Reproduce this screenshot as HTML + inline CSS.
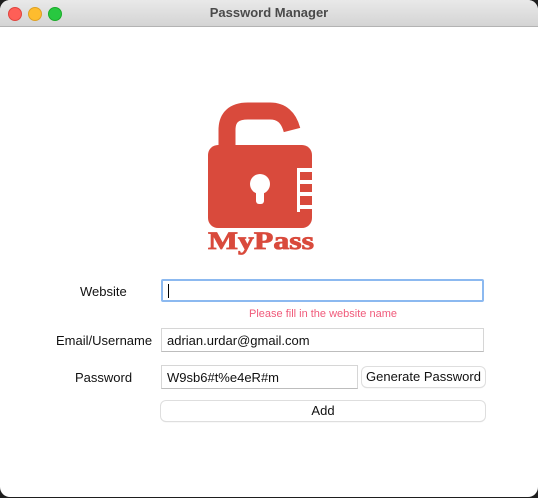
<!DOCTYPE html>
<html><head><style>
body{margin:0;width:538px;height:498px;background:#1e1e1e;font-family:"Liberation Sans",sans-serif;overflow:hidden}
.win{position:absolute;left:0;top:0;width:538px;height:497px;background:#fff;border-radius:10px;overflow:hidden}
.tb{height:26px;background:linear-gradient(#e9e9e9,#d4d4d4);border-bottom:1px solid #b3b3b3;text-align:center;font-weight:bold;font-size:13px;color:#4a4a4a;line-height:26px;position:relative}
.d{position:absolute;top:7px;width:12px;height:12px;border-radius:50%}
.lbl{position:absolute;font-size:13px;color:#111;text-align:center}
.in{position:absolute;background:#fff;border:1px solid #d6d6d6;border-bottom-color:#bdbdbd;box-sizing:border-box;font-size:13px;padding-left:5px;color:#111}
.btn{position:absolute;background:#fff;border-radius:5px;box-shadow:0 0 0 1px #dedede,0 1px 1px #ccc;font-size:13px;text-align:center;color:#111}
</style></head><body>
<div class="win">
<div class="tb">Password Manager
<div class="d" style="left:8px;background:#fe5f57;border:.5px solid #e0443e"></div>
<div class="d" style="left:28px;background:#febc2e;border:.5px solid #dea123"></div>
<div class="d" style="left:48px;background:#28c840;border:.5px solid #1aab29"></div>
</div>
<svg style="position:absolute;left:0;top:0" width="538" height="260">
<path d="M227 147 V130 Q227 111 248 111 H270 Q287 111 292 130" fill="none" stroke="#d94a3c" stroke-width="17"/>
<rect x="208" y="145" width="104" height="83" rx="10" fill="#d94a3c"/>
<circle cx="260" cy="184" r="10" fill="#fff"/>
<rect x="256" y="186" width="8" height="18" rx="3" fill="#fff"/>
<rect x="297" y="168" width="3" height="44" fill="#fff"/>
<rect x="297" y="168" width="16" height="4" fill="#fff"/>
<rect x="297" y="180" width="16" height="4" fill="#fff"/>
<rect x="297" y="192" width="16" height="4" fill="#fff"/>
<rect x="297" y="205" width="16" height="4" fill="#fff"/>
<text x="208" y="249" font-family="Liberation Serif,serif" font-weight="bold" font-size="25" fill="#d94a3c" textLength="106" lengthAdjust="spacingAndGlyphs" stroke="#d94a3c" stroke-width="0.8">MyPass</text>
</svg>
<div class="lbl" style="left:80px;top:284px">Website</div>
<div class="in" style="left:161px;top:279px;width:323px;height:23px;border:2px solid #8cb9f0;border-radius:2px"><span style="display:inline-block;width:1px;height:14px;background:#000;margin-top:3px"></span></div>
<div style="position:absolute;left:249px;top:308px;font-size:11px;color:#f05a7a">Please fill in the website name</div>
<div class="lbl" style="left:56px;top:333px">Email/Username</div>
<div class="in" style="left:161px;top:328px;width:323px;height:24px;line-height:23px">adrian.urdar@gmail.com</div>
<div class="lbl" style="left:75px;top:370px">Password</div>
<div class="in" style="left:161px;top:365px;width:197px;height:24px;line-height:23px">W9sb6#t%e4eR#m</div>
<div class="btn" style="left:362px;top:367px;width:123px;height:20px;line-height:20px">Generate Password</div>
<div class="btn" style="left:161px;top:401px;width:324px;height:20px;line-height:20px">Add</div>
</div>
</body></html>
